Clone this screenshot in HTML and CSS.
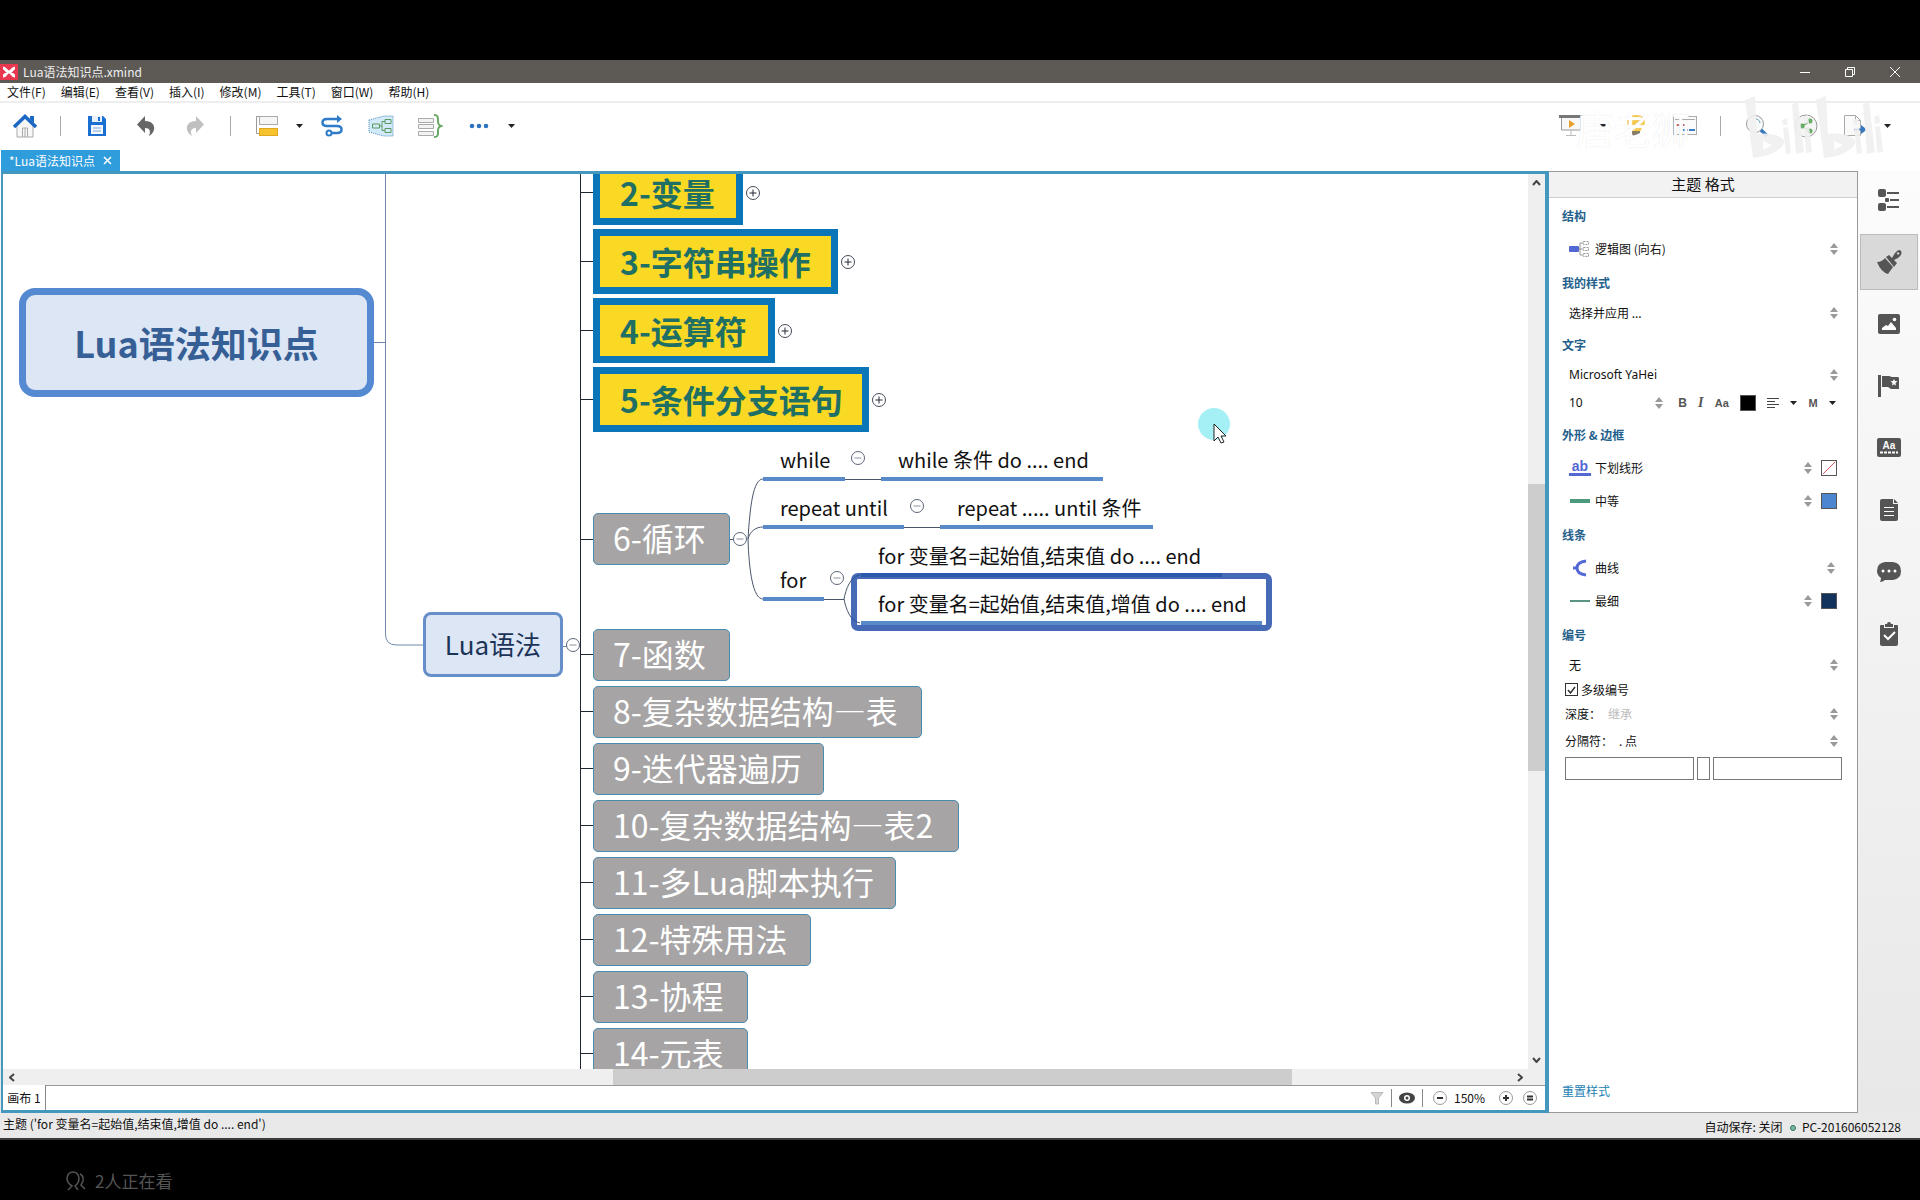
FILE: index.html
```html
<!DOCTYPE html>
<html lang="zh-CN">
<head>
<meta charset="utf-8">
<title>Lua语法知识点.xmind</title>
<link rel="stylesheet" href="styles.css">
</head>
<body>
<svg class="defs" aria-hidden="true">
  <symbol id="spin" viewBox="0 0 8 12"><path d="M4 0 8 5H0zM0 7h8l-4 5z" fill="#9a9a9a"/></symbol>
  <symbol id="caret" viewBox="0 0 7 4"><path d="M0 0h7L3.500 4z" fill="#222"/></symbol>
  <symbol id="plus" viewBox="0 0 16 16"><circle cx="8" cy="8" r="6.500" fill="#fff" stroke="#444a58"/><path d="M4.500 8h7M8 4.500v7" stroke="#222836" fill="none"/></symbol>
  <symbol id="minus" viewBox="0 0 16 16"><circle cx="8" cy="8" r="6.500" fill="#fff" stroke="#5c6478"/><path d="M4.500 8h7" stroke="#8a90a0" fill="none"/></symbol>
</svg>
<div class="screen">
<main class="app">
  <header class="titlebar">
    <svg class="appicon" viewBox="0 0 18 16"><rect width="18" height="16" fill="#e8384f"/><path d="M3 4c3 0 3 4 6 4s3 4 6 4M3 12c3 0 3-4 6-4s3-4 6-4" stroke="#fff" stroke-width="3" fill="none"/></svg>
    <h1 class="title">Lua语法知识点.xmind</h1>
    <button class="win" aria-label="最小化"><svg width="12" height="12"><path d="M1 6.500h10" stroke="#fff"/></svg></button>
    <button class="win" aria-label="还原"><svg width="12" height="12" fill="none" stroke="#fff"><path d="M1.500 3.500h7v7h-7zM3.500 3V1.500h7v7H9"/></svg></button>
    <button class="win" aria-label="关闭"><svg width="12" height="12"><path d="M1 1l10 10M11 1 1 11" stroke="#fff"/></svg></button>
  </header>
  <nav class="menubar">
    <button>文件(F)</button><button>编辑(E)</button><button>查看(V)</button><button>插入(I)</button><button>修改(M)</button><button>工具(T)</button><button>窗口(W)</button><button>帮助(H)</button>
  </nav>
  <div class="toolbar">
    <button class="tool" aria-label="主页"><svg width="26" height="24"><path d="M5 12v11h16V12l-8-8z" fill="#f7f7f7" stroke="#aaa"/><path d="M10.500 23v-9h5v9M13 14v9" fill="none" stroke="#aaa"/><path d="M2 13 13 2.500 24 13" fill="none" stroke="#1b68c4" stroke-width="3.500"/><path d="M18 2h4v7l-4-4z" fill="#1b68c4"/></svg></button>
    <span class="rule"></span>
    <button class="tool" aria-label="保存"><svg width="20" height="22"><path d="M1 1h15l3 3v17H1z" fill="#1a6fd0"/><path d="M5 1h10v6H5z" fill="#e8f2fc"/><path d="M11 2h2v4h-2z" fill="#1a6fd0"/><path d="M4 10h12v9H4z" fill="#f4f8fd"/><path d="M6 13h8M6 16h8" stroke="#7aa9dd"/></svg></button>
    <button class="tool" aria-label="撤销"><svg width="20" height="22"><path d="M9 1v5c7 0 10 4 9 9-1 3-3 5-5 6 2-5 1-8-4-8v5L1 9.500z" fill="#666"/></svg></button>
    <button class="tool" aria-label="重做"><svg width="20" height="22"><path d="M11 1v5C4 6 1 10 2 15c1 3 3 5 5 6-2-5-1-8 4-8v5l8-8.500z" fill="#c0c0c0"/></svg></button>
    <span class="rule"></span>
    <button class="tool" aria-label="主题"><svg width="24" height="22"><path d="M6 1.500H1.500v17H6" fill="none" stroke="#999"/><rect x="4.500" y="1.500" width="18" height="8" fill="#f5f5f5" stroke="#aaa"/><rect x="4.500" y="13.500" width="18" height="7" fill="#f7c32e" stroke="#e0a820"/></svg></button>
    <button class="drop" aria-label="更多主题"><svg class="caret"><use href="#caret"/></svg></button>
    <button class="tool" aria-label="联系"><svg width="24" height="22" fill="none" stroke="#2e7cc8"><path d="M18 4H7C1 4 1 11 7 11h10c6 0 6 7 0 7h-5" stroke-width="2.500"/><path d="M17 0l5 4-5 4z" fill="#2e7cc8" stroke="none"/><circle cx="9" cy="18" r="2.500" stroke-width="2"/></svg></button>
    <button class="tool" aria-label="外框"><svg width="26" height="22" fill="none"><path d="M1 5 16 1h9v20h-9L1 17z" fill="#d3ebf8" stroke="#4a8cc0" stroke-dasharray="1 1"/><path d="M4.500 9h7v4h-7zM17 4.500h6v4h-6zM17 13.500h6v4h-6zM11.500 11H14M17 6.500h-3v9h3" stroke="#5a9a62"/></svg></button>
    <button class="tool" aria-label="概要"><svg width="26" height="24" fill="none"><path d="M1.500 4.500h15v4h-15zM1.500 10.500h15v4h-15zM1.500 17.500h15v4h-15z" fill="#f3f3f3" stroke="#aaa"/><path d="M17 1c4 0 4 2 4 5s0 5 3 6c-3 1-3 3-3 6s0 5-4 5" stroke="#69a765" stroke-width="2"/></svg></button>
    <button class="tool" aria-label="更多"><svg width="20" height="6" fill="#2f74c0"><circle cx="3" cy="3" r="2.300"/><circle cx="10" cy="3" r="2.300"/><circle cx="17" cy="3" r="2.300"/></svg></button>
    <button class="drop" aria-label="更多选项"><svg class="caret"><use href="#caret"/></svg></button>
    <span class="grow"></span>
    <button class="tool" aria-label="演示"><svg width="26" height="24"><path d="M3.500 3h19v13h-19z" fill="#f8f8f8" stroke="#999"/><path d="M1 1h24v3H1z" fill="#777"/><path d="M11 6l6 4-6 4z" fill="#e8a02c"/><path d="M13 16v5M8 21.500h10" stroke="#bbb"/></svg></button>
    <button class="drop" aria-label="演示选项"><svg class="caret"><use href="#caret"/></svg></button>
    <button class="tool" aria-label="头脑风暴"><svg width="20" height="24"><path d="M10 1c12 0 10 11 5 14v2H5v-2C0 12-2 1 10 1z" fill="#f7c94e"/><path d="M8 5c-3 0-4 2-4 4" stroke="#fff3c8" stroke-width="2" fill="none"/><path d="M6 17h8v3l-2 3H8l-2-3z" fill="#8a7d68"/></svg></button>
    <button class="tool" aria-label="甘特图"><svg width="24" height="22"><rect x=".5" y="1.500" width="23" height="18" fill="#fbfbfb" stroke="#aaa"/><path d="M2 4.500h20" stroke="#aaa"/><path d="M2 10h7M10 10h4" stroke="#c25b56" stroke-width="2"/><path d="M10 15h5M16 15h6" stroke="#3a7fc4" stroke-width="2"/></svg></button>
    <span class="rule"></span>
    <button class="tool" aria-label="搜索"><svg width="24" height="24" fill="none"><circle cx="10" cy="10" r="8.500" fill="#f9fbfd" stroke="#999"/><path d="M11 5c2 0 4 2 4 4" stroke="#59a" /><path d="M16 16l6 6" stroke="#3578c0" stroke-width="3.500"/></svg></button>
    <button class="tool" aria-label="分享"><svg width="24" height="24"><circle cx="12" cy="12" r="11" fill="#f4f6f4" stroke="#999"/><path d="M16 7l-8 5 8 5" fill="none" stroke="#68ad68" stroke-width="2"/><g fill="#68ad68"><circle cx="16" cy="7" r="2.500"/><circle cx="8" cy="12" r="2.500"/><circle cx="16" cy="17" r="2.500"/></g></svg></button>
    <button class="tool" aria-label="导出"><svg width="24" height="24"><path d="M1.500 1.500h11l5 5v15h-16zM12.500 1.500v5h5" fill="#fafafa" stroke="#aaa"/><path d="M11 15.500h8" stroke="#3578c0" stroke-width="2"/><path d="M18 11l6 4.500-6 4.500z" fill="#3578c0"/></svg></button>
    <button class="drop" aria-label="导出选项"><svg class="caret"><use href="#caret"/></svg></button>
    <div class="watermark">
      <span>唐老狮</span>
      <svg width="142" height="64" viewBox="0 0 142 64" aria-label="bilibili"><defs><g id="bi"><path d="M1 4 11 0l2 38c17-2 29 4 27 9-2 7-16 14-31 15z"/><path d="M19 45v9l9-5z" fill="#fff"/><path d="M48 8l6-2 6 50-8 2zM38 24l5-2 1 6-5 2zM59 21l5-2 1 8-5 1zM39 32l5-1 3 26-5 1zM60 31l5-1 3 26-6 1z"/></g></defs><g fill="#efefef" fill-opacity=".9"><use href="#bi"/><use href="#bi" x="71"/></g></svg>
    </div>
  </div>
  <div class="tabs"><button class="tab">*Lua语法知识点 <svg width="9" height="9"><path d="M1 1l7 7M8 1 1 8" stroke="#fff" stroke-width="1.500"/></svg></button></div>

  <div class="work">
    <section class="editor">
      <div class="view">
        <div class="canvas">
          <svg class="links" fill="none"><g transform="translate(-3 -174)">
            <path d="M374 342.500h11.500M385.500 174v460q0 11 11 11h27" stroke="#7088a8"/>
            <path d="M580.500 174v900" stroke="#1f2633"/>
            <path d="M562 646.500h18" stroke="#7088a8"/>
            <path d="M581 192.500h12M581 261.500h12M581 330.500h12M581 399.500h12M581 539.500h12M581 654.500h12M581 711.500h12M581 768.500h12M581 825.500h12M581 882.500h12M581 939.500h12M581 996.500h12M581 1053.500h12" stroke="#1f2633"/>
            <path d="M729 539.500h18M748 539c2-32 5-60 15-60M748 539c2-8 8-12 15-12M748 539c1 32 5 60 15 60M845 479.500h36M904 527.500h36M824 599.500h20M844 599c2-10 6-22 16-24M844 599c2 10 6 22 16 24" stroke="#4a556a"/>
          </g></svg>
          <div class="topic root p-root">Lua语法知识点</div>
          <div class="topic main p-lua"><div class="box">Lua语法</div><button class="toggle" aria-label="折叠"><svg><use href="#minus"/></svg></button></div>
          <div class="topic hot p2"><div class="box w2">2-变量</div><button class="toggle" aria-label="展开"><svg><use href="#plus"/></svg></button></div>
          <div class="topic hot p3"><div class="box w3">3-字符串操作</div><button class="toggle" aria-label="展开"><svg><use href="#plus"/></svg></button></div>
          <div class="topic hot p4"><div class="box w4">4-运算符</div><button class="toggle" aria-label="展开"><svg><use href="#plus"/></svg></button></div>
          <div class="topic hot p5"><div class="box w5">5-条件分支语句</div><button class="toggle" aria-label="展开"><svg><use href="#plus"/></svg></button></div>
          <div class="topic gray p6"><div class="box w6">6-循环</div><button class="toggle" aria-label="折叠"><svg><use href="#minus"/></svg></button></div>
          <div class="later">
            <div class="box w6">7-函数</div><div class="box w8">8-复杂数据结构—表</div><div class="box w9">9-迭代器遍历</div><div class="box w10">10-复杂数据结构—表2</div><div class="box w11">11-多Lua脚本执行</div><div class="box w12">12-特殊用法</div><div class="box w13">13-协程</div><div class="box w13">14-元表</div>
          </div>
          <div class="topic leaf p-while"><div class="box w-while">while</div><button class="toggle" aria-label="折叠"><svg><use href="#minus"/></svg></button></div>
          <div class="topic leaf p-while2"><div class="box w-while2">while 条件 do .... end</div></div>
          <div class="topic leaf p-rep"><div class="box w-rep">repeat until</div><button class="toggle" aria-label="折叠"><svg><use href="#minus"/></svg></button></div>
          <div class="topic leaf p-rep2"><div class="box w-rep2">repeat ..... until 条件</div></div>
          <div class="topic leaf p-for"><div class="box w-for">for</div><button class="toggle" aria-label="折叠"><svg><use href="#minus"/></svg></button></div>
          <div class="topic leaf p-for1"><div class="box w-for1">for 变量名=起始值,结束值 do .... end</div></div>
          <div class="topic leaf p-for2"><div class="box w-for2">for 变量名=起始值,结束值,增值 do .... end</div></div>
          <div class="selection"></div>
          <svg class="pointer" width="40" height="40"><circle cx="16" cy="16" r="16" fill="#a4f0f4"/><path d="M16 16v17l4-4 3 6 3-1-3-6h5z" fill="#fff" stroke="#222"/></svg>
        </div>
        <div class="vscroll"><svg width="9" height="6"><path d="M1 5l3.500-4L8 5" class="arrow"/></svg><div class="vbefore"></div><div class="vthumb"></div><div class="vafter"></div><svg width="9" height="6"><path d="M1 1l3.500 4L8 1" class="arrow"/></svg></div>
      </div>
      <div class="hscroll"><svg width="6" height="9"><path d="M5 1 1 4.500 5 8" class="arrow"/></svg><div class="hbefore"></div><div class="hthumb"></div><div class="hafter"></div><svg width="6" height="9"><path d="M1 1l4 3.500L1 8" class="arrow"/></svg></div>
      <div class="sheets">
        <button class="sheet">画布 1</button>
        <div class="zoombar">
          <button aria-label="筛选"><svg width="14" height="14"><path d="M1 1.500h12L8.500 7v6h-3V7z" fill="#d5d5d5" stroke="#bbb"/></svg></button>
          <i></i>
          <button aria-label="显示"><svg width="16" height="12"><ellipse cx="8" cy="6" rx="8" ry="5.500" fill="#444"/><circle cx="8" cy="6" r="3" fill="#fff"/><circle cx="8" cy="6" r="1.500" fill="#444"/></svg></button>
          <i></i>
          <button class="out" aria-label="缩小"><svg width="14" height="14" fill="none"><circle cx="7" cy="7" r="6.500" stroke="#999"/><path d="M4 7h6" stroke="#333" stroke-width="2"/></svg></button>
          <span class="pct">150%</span>
          <button aria-label="放大"><svg width="14" height="14" fill="none"><circle cx="7" cy="7" r="6.500" stroke="#999"/><path d="M4 7h6M7 4v6" stroke="#333" stroke-width="2"/></svg></button>
          <button class="fit" aria-label="适应"><svg width="14" height="14" fill="none"><circle cx="7" cy="7" r="6.500" stroke="#999"/><path d="M4 5.500h6M4 8.500h6" stroke="#333" stroke-width="2"/></svg></button>
        </div>
      </div>
    </section>

    <aside class="panel">
      <h2>主题 格式</h2>
      <h3>结构</h3>
      <label class="row ind"><svg width="22" height="16" fill="none"><path d="M14 2h-3v12h3M8 8h6" stroke="#999"/><rect y="5" width="10" height="6" rx="1" fill="#5468d4"/><path d="M14.500.5h5v3h-5zM14.500 6.500h5v3h-5zM14.500 12.500h5v3h-5z" stroke="#999" stroke-dasharray="2 1"/></svg><select class="gap4" aria-label="结构"><option>逻辑图 (向右)</option></select><svg class="spin"><use href="#spin"/></svg></label>
      <h3>我的样式</h3>
      <label class="row tight ind"><select aria-label="我的样式"><option>选择并应用 ...</option></select><svg class="spin"><use href="#spin"/></svg></label>
      <h3>文字</h3>
      <label class="row tight ind"><select class="latin" aria-label="字体"><option>Microsoft YaHei</option></select><svg class="spin"><use href="#spin"/></svg></label>
      <div class="row tight ind font">
        <label class="size"><select class="latin" aria-label="字号"><option>10</option></select><svg class="spin"><use href="#spin"/></svg></label>
        <button aria-label="粗体"><b>B</b></button><button aria-label="斜体"><b><em>I</em></b></button><button aria-label="大小写"><b class="aa">Aa</b></button><button class="sw black" aria-label="文字颜色"></button><button class="align" aria-label="对齐"><svg width="12" height="11"><path d="M0 .5h12M0 3.500h8M0 6.500h12M0 9.500h8" stroke="#444"/></svg></button><button aria-label="对齐选项"><svg class="caret"><use href="#caret"/></svg></button><button class="m" aria-label="编号格式"><b class="aa">M</b></button><button aria-label="格式选项"><svg class="caret"><use href="#caret"/></svg></button>
      </div>
      <h3>外形 &amp; 边框</h3>
      <label class="row ind"><span class="ab">ab</span><select class="gap4" aria-label="外形"><option>下划线形</option></select><svg class="spin"><use href="#spin"/></svg><svg class="sw" viewBox="0 0 16 16"><path d="M1 15 15 1" stroke="#d03a3a"/></svg></label>
      <label class="row ind"><span class="bar thick"></span><select class="gap4" aria-label="边框粗细"><option>中等</option></select><svg class="spin"><use href="#spin"/></svg><span class="sw blue"></span></label>
      <h3>线条</h3>
      <label class="row ind"><svg width="22" height="18" fill="none" stroke="#5468d4" stroke-width="3"><path d="M4 9h5M17 2Q8 3 8 9t9 7"/></svg><select class="gap4" aria-label="线形"><option>曲线</option></select><svg class="spin back"><use href="#spin"/></svg></label>
      <label class="row ind"><span class="bar thin"></span><select class="gap4" aria-label="线条粗细"><option>最细</option></select><svg class="spin"><use href="#spin"/></svg><span class="sw navy"></span></label>
      <h3>编号</h3>
      <label class="row tight ind"><select aria-label="编号"><option>无</option></select><svg class="spin"><use href="#spin"/></svg></label>
      <div class="row low"><span class="tick"><input type="checkbox" id="multi" checked><svg width="9" height="8"><path d="M1 4l2.500 3L8 1" fill="none" stroke="#333" stroke-width="1.500"/></svg></span><label for="multi">多级编号</label></div>
      <label class="row low"><span class="key">深度：</span><select class="dim" aria-label="深度"><option>继承</option></select><svg class="spin"><use href="#spin"/></svg></label>
      <label class="row tight"><span class="key wide">分隔符：</span><select aria-label="分隔符"><option>. 点</option></select><svg class="spin"><use href="#spin"/></svg></label>
      <div class="fields"><input type="text" aria-label="前缀"><input type="text" class="mini" aria-label="编号文本"><input type="text" aria-label="后缀"></div>
      <a class="reset" href="#">重置样式</a>
    </aside>

    <nav class="rail">
      <button aria-label="大纲"><svg width="24" height="24" fill="#555"><rect x="1" y="1" width="8" height="8" rx="2"/><rect x="1" y="15" width="8" height="8" rx="2"/><rect x="8" y="10" width="4" height="4" rx="1"/><path d="M10 4h12v2H10zM13 11h9v2h-9zM10 18h12v2H10z"/></svg></button>
      <button class="on" aria-label="格式"><svg width="26" height="26" fill="#555"><path fill-rule="evenodd" d="M10 8l3-2 3 3 3-5q4-5 6-2t-3 7l-4 2 3 3-3 4z M22 3.200a1.200 1.200 0 1 0 .1 0z"/><path d="M9 9l8 9-5 7q-7-2-11-12 5 0 8-4z"/></svg></button>
      <button aria-label="图片"><svg width="24" height="22"><rect x="1" y="1" width="22" height="20" rx="2" fill="#555"/><path d="M5 17v-2l4-3 2 1 3-4 5 6v2z" fill="#fff"/><circle cx="17.500" cy="6.500" r="1.800" fill="#fff"/></svg></button>
      <button aria-label="图标"><svg width="24" height="24"><path d="M1 1h3v22H1zM5 2h7l3 1h6q1 0 1 2v10h-8l-3-2H5z" fill="#555"/><path d="M17 5l1 2 2.500.3-2 1.600.5 2.600-2-1.300-2 1.300.5-2.600-2-1.600L16 7z" fill="#fff"/></svg></button>
      <button aria-label="样式"><svg width="24" height="20"><rect width="24" height="19" rx="2" fill="#555"/><text x="12" y="11" text-anchor="middle" class="aatxt">Aa</text><path d="M3 14.500h18" stroke="#fff" stroke-width="2" stroke-dasharray="3 1"/></svg></button>
      <button aria-label="备注"><svg width="20" height="24"><path d="M1 3q0-2 2-2h11v5h5v15q0 2-2 2H3q-2 0-2-2zM15 1l4 4h-4z" fill="#555"/><path d="M5 9.500h10M5 13.500h10M5 17.500h10" stroke="#fff"/></svg></button>
      <button aria-label="批注"><svg width="24" height="20"><path d="M8 0h8q8 1 8 9t-8 9H8q-2 2-5 2 1-2 1-4Q0 13 0 9q0-8 8-9z" fill="#555"/><g fill="#fff"><circle cx="6" cy="9" r="1.500"/><circle cx="12" cy="9" r="1.500"/><circle cx="18" cy="9" r="1.500"/></g></svg></button>
      <button aria-label="任务"><svg width="20" height="24"><path d="M1 4q0-1 1-1h3v3h10V3h3q1 0 1 1v18q0 2-2 2H3q-2 0-2-2zM6 2h2q0-2 2-2t2 2h2v3H6z" fill="#555"/><path d="M5 13l4 4 7-7" stroke="#fff" stroke-width="2" fill="none"/></svg></button>
    </nav>
  </div>
  <footer class="status"><span>主题 ('for 变量名=起始值,结束值,增值 do .... end')</span><span class="right">自动保存: 关闭 <i></i> PC-201606052128</span></footer>
</main>
<p class="watching"><svg width="22" height="20" fill="none" stroke="#555" stroke-width="1.500"><path d="M3 19l4-4Q2 12 2 7q1-6 6-6t6 6q0 5-4 8l3 4M15 3q4 2 3 7l-2 4 4 4"/></svg>2人正在看</p>
</div>
</body>
</html>
```
FILE: styles.css
```css
* { box-sizing: border-box; }
body {
  margin: 0;
  background: #000;
  color: #111;
  font-family: "Noto Sans CJK SC", sans-serif;
  font-size: 12px;
  line-height: 18px;
}
h1, h2, h3, p { margin: 0; font-weight: 400; }
button, select, input { font: inherit; color: inherit; }
button { padding: 0; border: 0; background: none; display: flex; align-items: center; justify-content: center; }
svg { display: block; flex: none; }
.defs { position: absolute; width: 0; height: 0; }
.caret { width: 7px; height: 4px; }
.spin { width: 8px; height: 12px; }
.grow { flex: 1; }

.screen { display: flex; flex-direction: column; min-height: 100vh; padding-top: 60px; }
.app { flex: 1; display: flex; flex-direction: column; background: #fff; border-bottom: 2px solid #3c3c3c; }
.watching { height: 60px; display: flex; align-items: center; gap: 8px; padding: 22px 0 0 65px; color: #555; font-size: 17px; }

.titlebar { display: flex; align-items: center; height: 23px; background: #5d5a56; color: #fff; }
.appicon { width: 18px; height: 16px; }
.title { flex: 1; padding-left: 5px; font-size: 12px; color: #eee; }
.win { width: 45px; height: 23px; }
.win:last-child { margin-right: 3px; }
.menubar { display: flex; gap: 15px; height: 20px; padding-left: 7px; border-bottom: 2px solid #eee; }

.toolbar { position: relative; display: flex; align-items: center; height: 47px; padding: 0 25px 2px 0; }
.tool { width: 49px; height: 40px; }
.drop { width: 16px; height: 40px; }
.rule { width: 1px; height: 20px; margin: 0 11px; background: #aaa; }
.watermark { position: absolute; right: 34px; top: -7px; display: flex; align-items: center; gap: 54px; pointer-events: none; }
.watermark span { color: #fff; font-size: 38px; line-height: 64px; text-shadow: 0 0 1px #ddd; }

.tabs { display: flex; height: 21px; padding-left: 1px; }
.tab { gap: 8px; width: 119px; background: #2f9cdb; color: #fff; }

.work { flex: 1; display: flex; background: linear-gradient(#fcfcfc, #e8e8e8); }
.editor { flex: 1; min-width: 0; display: flex; flex-direction: column; margin-left: 1px; border: solid #4597bd; border-width: 3px 4px 3px 2px; background: #fff; }
.view { flex: 1; display: flex; min-height: 0; }
.canvas { position: relative; flex: 1; overflow: hidden; }
.vscroll { width: 17px; background: #efefef; display: flex; flex-direction: column; align-items: center; padding: 6px 0; }
.vbefore { flex: 298; }
.vthumb { flex: 287; width: 17px; background: #cdcdcd; }
.vafter { flex: 286; }
.hscroll { height: 16px; background: #efefef; display: flex; align-items: center; padding: 0 22px 0 6px; }
.hbefore { flex: 598; }
.hthumb { flex: 680; height: 16px; background: #cdcdcd; }
.hafter { flex: 225; }
.arrow { fill: none; stroke: #444; stroke-width: 2; }
.sheets { display: flex; justify-content: space-between; height: 25px; }
.sheet { width: 43px; border-right: 1px solid #888; }
.zoombar { flex: 1; border-top: 1px solid #999; display: flex; align-items: center; justify-content: flex-end; gap: 7px; padding-right: 8px; }
.zoombar i { width: 1px; height: 18px; background: #888; }
.zoombar button { height: 24px; }
.pct { width: 38px; }
.out { margin-left: 3px; }
.fit { margin-left: 3px; }

.links { position: absolute; width: 100%; height: 100%; }
.topic { position: absolute; display: flex; align-items: center; gap: 2px; white-space: nowrap; }
.box { white-space: nowrap; }
.toggle { width: 16px; height: 16px; }
.toggle svg { width: 16px; height: 16px; }
.root { width: 355px; height: 109px; justify-content: center; border: 7px solid #5589d2; border-radius: 16px; background: #dce6f4; color: #365f96; font-size: 36px; font-weight: 700; line-height: 48px; padding-bottom: 2px; }
.main .box { width: 140px; height: 65px; border: 3px solid #668fc9; border-radius: 8px; background: #dce6f4; color: #1c3358; font-size: 26px; line-height: 57px; text-align: center; }
.hot .box { height: 65px; padding-left: 20px; border: 7px solid #0a76b8; background: #f9d923; color: #1f6f64; font-size: 32px; line-height: 51px; font-weight: 700; }
.gray .box, .later .box { height: 52px; padding-left: 19px; border: 1px solid #4a8cb0; border-radius: 5px; background: #a6a4a4; color: #fff; font-size: 32px; line-height: 47px; }
.later { position: absolute; left: 590px; top: 455px; display: flex; flex-direction: column; gap: 5px; }
.leaf { gap: 5px; }
.leaf .box { height: 37px; padding-left: 17px; border-bottom: 4px solid #588ac9; font-size: 20px; line-height: 31px; color: #111; }
.leaf .toggle { margin-bottom: 9px; }
.selection { position: absolute; left: 848px; top: 399px; width: 421px; height: 58px; border: 6px solid rgba(34, 78, 168, .84); border-radius: 7px; }
.pointer { position: absolute; left: 1195px; top: 234px; }

.p-root { left: 16px; top: 114px; }
.p-lua { left: 420px; top: 438px; }
.p2 { left: 590px; top: -14px; }
.p3 { left: 590px; top: 55px; }
.p4 { left: 590px; top: 124px; }
.p5 { left: 590px; top: 193px; }
.p6 { left: 590px; top: 339px; }
.p-while { left: 760px; top: 270px; }
.p-while2 { left: 878px; top: 270px; }
.p-rep { left: 760px; top: 318px; }
.p-rep2 { left: 937px; top: 318px; }
.p-for { left: 760px; top: 390px; }
.p-for1 { left: 858px; top: 366px; }
.p-for2 { left: 858px; top: 414px; }
.w2 { width: 150px; }
.w3 { width: 245px; }
.w4 { width: 182px; }
.w5 { width: 276px; }
.w6 { width: 137px; }
.w8 { width: 329px; }
.w9 { width: 231px; }
.w10 { width: 366px; }
.w11 { width: 303px; }
.w12 { width: 218px; }
.w13 { width: 155px; }
.w-while { width: 82px; }
.w-while2 { width: 222px; }
.w-rep { width: 141px; }
.w-rep2 { width: 213px; }
.w-for { width: 61px; }
.w-for1 { width: 361px; }
.w-for2 { width: 401px; }

.panel { width: 309px; display: flex; flex-direction: column; background: #fff; border: 1px solid #999; border-left: 0; }
.panel h2 { height: 26px; border-bottom: 1px solid #ccc; background: #f2f2f2; font-size: 15px; line-height: 23px; text-align: center; }
.panel h3 { height: 34px; padding-left: 13px; color: #24608c; font-size: 12px; font-weight: 700; line-height: 36px; }
.row { display: flex; align-items: center; height: 33px; padding: 0 19px 0 16px; }
.ind { padding-left: 20px; }
.tight { height: 28px; }
.low { height: 24px; padding-bottom: 3px; }
.row select { flex: 1; min-width: 0; height: 20px; padding: 0; border: 0; background: none; appearance: none; line-height: 20px; }
.gap4 { margin-left: 4px; }
.latin { font-family: "Noto Sans", sans-serif; }
.row .dim { color: #bbb; }
.key { width: 43px; }
.wide { width: 54px; }
.back { margin-right: 3px; }
.size { width: 94px; display: flex; align-items: center; margin-right: 4px; color: #111; }
.font { padding-right: 21px; justify-content: space-between; color: #555; font-family: "Liberation Sans", sans-serif; }
.font em { font-family: "Liberation Serif", serif; font-size: 14px; }
.font .aa { font-size: 11px; }
.sw { width: 16px; height: 16px; border: 1px solid #555; }
.row > .spin + .sw { margin-left: 9px; margin-right: 1px; }
.black { background: #000; }
.blue { background: #4c86d0; }
.navy { background: #14335c; }
.ab { width: 22px; border-bottom: 3px solid #5468d4; color: #5468d4; font: bold 14px/14px "Liberation Sans", sans-serif; text-align: center; }
.bar { width: 20px; margin: 0 1px; }
.thick { height: 4px; background: #4b9a7c; }
.thin { height: 2px; background: #5a9484; }
.tick { display: grid; place-items: center; margin-right: 3px; }
.tick > * { grid-area: 1 / 1; }
.tick input { appearance: none; width: 13px; height: 13px; margin: 0; border: 1px solid #333; background: #fff; }
.tick svg { pointer-events: none; z-index: 1; }
.fields { display: flex; gap: 3px; margin: 2px 15px 0 16px; }
.fields input { flex: 1; min-width: 0; height: 23px; border: 1px solid #777; background: #fff; }
.fields .mini { flex: 0 0 13px; }
.reset { margin: auto 0 12px 13px; color: #1c82b4; text-decoration: none; }

.rail { width: 62px; display: flex; flex-direction: column; align-items: center; gap: 6px; padding-top: 1px; }
.rail button { width: 58px; height: 56px; }
.rail .on { background: #d9d9d9; border: 1px solid #bbb; }
.aatxt { fill: #fff; font: bold 10px "Liberation Sans", sans-serif; }

.status { display: flex; justify-content: space-between; height: 25px; padding: 0 19px 0 3px; background: #e9e9e9; line-height: 22px; }
.status .right { line-height: 28px; }
.status i { display: inline-block; width: 6px; height: 6px; margin: 0 3px 1px 5px; border: 1px solid #2f7a5c; border-radius: 50%; background: #7ab89c; }
```
